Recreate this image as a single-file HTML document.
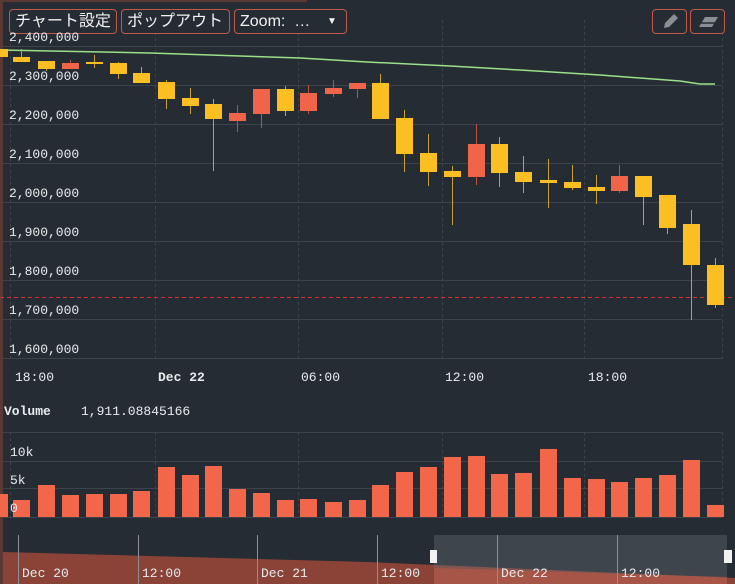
<!DOCTYPE html>
<html><head><meta charset="utf-8"><style>
*{margin:0;padding:0;box-sizing:border-box}
body{width:735px;height:584px;overflow:hidden;background:#262c33;font-family:"Liberation Mono",monospace;color:#e8ecef;position:relative}
svg{position:absolute;left:0;top:0}
.btn{position:absolute;top:9px;height:25px;border:1px solid #c25a4c;border-radius:4px;background:#262c33;color:#f2f2f2;font-family:"Liberation Sans","Noto Sans CJK JP",sans-serif;font-size:16px;line-height:23px;padding-left:5px;white-space:nowrap}
.t{position:absolute;font-size:13px;color:#e8ecef;white-space:nowrap}
</style></head><body>
<svg id="s" width="735" height="584" xmlns="http://www.w3.org/2000/svg"></svg>
<div class="btn" style="left:9px;width:108px">チャート設定</div>
<div class="btn" style="left:121px;width:109px">ポップアウト</div>
<div class="btn" style="left:234px;width:113px">Zoom:&nbsp;&nbsp;…<span style="position:absolute;left:92px;font-size:10px">▼</span></div>
<div class="btn" style="left:652px;width:35px;padding:0"><svg width="33" height="23" style="position:relative"><path d="M11 18 L12 13 L21 4 L25 8 L16 17 Z" fill="#8b8f94"/></svg></div>
<div class="btn" style="left:690px;width:35px;padding:0"><svg width="33" height="23" style="position:relative"><path d="M8 17 L14 7 L27 7 L21 17 Z" fill="#8b8f94"/><path d="M10 13 L24 13" stroke="#262c33" stroke-width="1.5"/></svg></div>
<div class="t" style="left:9px;top:30px">2,400,000</div>
<div class="t" style="left:9px;top:69px">2,300,000</div>
<div class="t" style="left:9px;top:108px">2,200,000</div>
<div class="t" style="left:9px;top:147px">2,100,000</div>
<div class="t" style="left:9px;top:186px">2,000,000</div>
<div class="t" style="left:9px;top:225px">1,900,000</div>
<div class="t" style="left:9px;top:264px">1,800,000</div>
<div class="t" style="left:9px;top:303px">1,700,000</div>
<div class="t" style="left:9px;top:342px">1,600,000</div>
<div class="t" style="left:15px;top:370px">18:00</div>
<div class="t" style="left:158px;top:370px;font-weight:bold">Dec 22</div>
<div class="t" style="left:301px;top:370px">06:00</div>
<div class="t" style="left:445px;top:370px">12:00</div>
<div class="t" style="left:588px;top:370px">18:00</div>
<div class="t" style="left:4px;top:404px;font-weight:bold">Volume</div>
<div class="t" style="left:81px;top:404px">1,911.08845166</div>
<div class="t" style="left:10px;top:445px">10k</div>
<div class="t" style="left:10px;top:473px">5k</div>
<div class="t" style="left:10px;top:501px">0</div>
<div class="t" style="left:22px;top:566px">Dec 20</div>
<div class="t" style="left:142px;top:566px">12:00</div>
<div class="t" style="left:261px;top:566px">Dec 21</div>
<div class="t" style="left:381px;top:566px">12:00</div>
<div class="t" style="left:501px;top:566px">Dec 22</div>
<div class="t" style="left:621px;top:566px">12:00</div>
<script>
var s=document.getElementById('s'),h='';
function r(x,y,w,hh,c){h+='<rect x="'+x+'" y="'+y+'" width="'+w+'" height="'+hh+'" fill="'+c+'"/>';}
function l(x1,y1,x2,y2,c,d,w){h+='<line x1="'+x1+'" y1="'+y1+'" x2="'+x2+'" y2="'+y2+'" stroke="'+c+'" stroke-width="'+(w||1)+'"'+(d?' stroke-dasharray="'+d+'"':'')+'/>';}
r(0,0,735,584,'#262c33');r(0,0,3,584,'#5a3833');r(0,0,307,2,'#5a3833');
[46,85,124,163,202,241,280,319,358].forEach(function(y){l(3,y+.5,722,y+.5,'#3b434b');});
[10,155,298,442,584,722].forEach(function(x){l(x+.5,20,x+.5,360,'#3b434b','3,3');l(x+.5,432,x+.5,517,'#3b434b','3,3');});
[432,461,488].forEach(function(y){l(3,y+.5,722,y+.5,'#3b434b');});
h+='<polyline fill="none" stroke="#9be08a" stroke-width="1.5" points="0,50 150,53 300,58 367,62 450,66 520,70 600,75 680,81 700,84 715,84"/>';
h+='<rect x="0" y="297" width="735" height="1" fill="none"/>';
for(var dx=0;dx<735;dx+=7)r(dx,297,4,1,'#d42f2f');
var Y='#fbbf24',R='#f0654a';
var c=[[0,49,57,49,57,Y],[13,57,62,49,62,Y],[38,61,69,61,71,Y],[62,63,69,60,69,R],[86,62,64,55,68,Y],[110,63,74,62,79,Y],[133,73,83,67,83,Y],[158,82,99,80,109,Y],[182,98,106,88,114,Y],[205,104,119,99,171,Y],[229,113,121,105,132,R],[253,89,114,89,128,R],[277,89,111,86,116,Y],[300,93,111,85,114,R],[325,88,94,80,97,R],[349,83,89,83,98,R],[372,83,119,74,119,Y],[396,118,154,110,172,Y],[420,153,172,134,186,Y],[444,171,177,166,225,Y],[468,144,177,124,185,R],[491,144,173,137,187,Y],[515,172,182,156,193,Y],[540,180,183,159,208,Y],[564,182,188,165,190,Y],[588,187,191,175,204,Y],[611,176,191,165,193,R],[635,176,197,176,225,Y],[659,195,228,195,234,Y],[683,224,265,210,320,Y],[707,265,305,258,308,Y]];
c.forEach(function(k){var w=k[0]==0?8:17,cx=k[0]+w/2;l(cx,k[3],cx,k[4],k[5]==Y?'#c9a02a':'#c0503c');r(k[0],k[1],w,Math.max(k[2]-k[1],2),k[5]);});
var v=[494,500,485,495,494,494,491,467,475,466,489,493,500,499,502,500,485,472,467,457,456,474,473,449,478,479,482,478,475,460,505];
v.forEach(function(t,i){var x=c[i][0],w=i==0?8:17;r(x,t,w,517-t,'#f26649');});
l(3,517.5,722,517.5,'#3b434b');
r(3,535,735,49,'#262c33');
h+='<polygon points="3,552 367,562 735,578 735,584 3,584" fill="#8a4336"/>';
r(434,535,293,49,'rgba(120,128,140,0.3)');
h+='<polygon points="434,568 727,577 727,584 434,584" fill="#c2563f" opacity="0.55"/>';
[18,138,257,377,497,617].forEach(function(x){l(x+.5,535,x+.5,584,'#8c9197');});
r(430,550,7,13,'#f2f2f2');r(724,550,8,13,'#f2f2f2');
s.innerHTML=h;
</script>
</body></html>
